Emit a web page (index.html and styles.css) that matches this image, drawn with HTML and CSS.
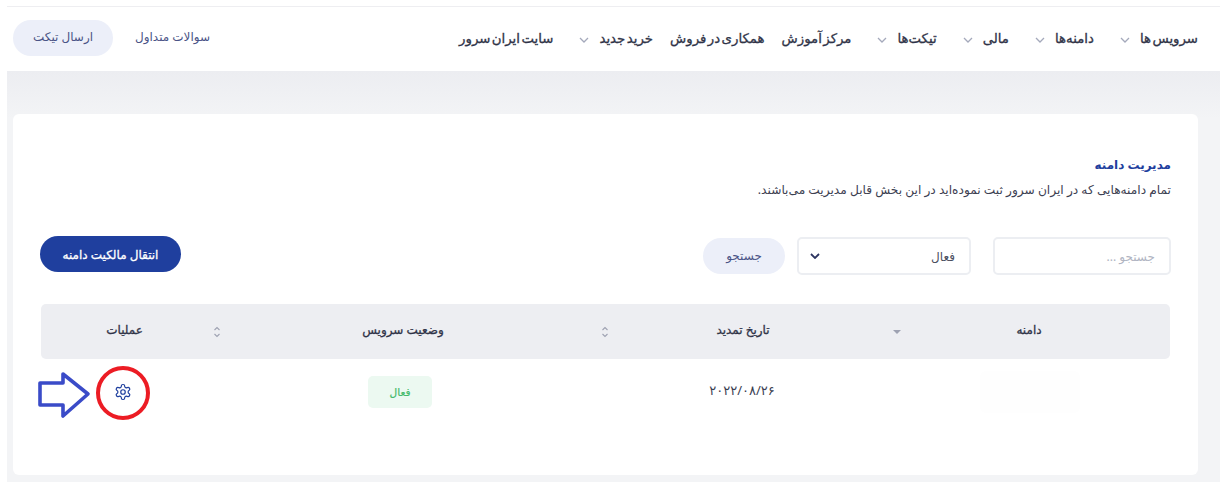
FILE: index.html
```html
<!DOCTYPE html>
<html lang="fa" dir="rtl">
<head>
<meta charset="utf-8">
<title>مدیریت دامنه</title>
<link rel="stylesheet" href="styles.css">
</head>
<body>
<div class="shell">
  <header class="topbar">
    <nav class="nav">
      <a class="nav-item">سرویس ها<svg class="chev" viewBox="0 0 10 6"><path d="M1 1l4 4 4-4"/></svg></a>
      <a class="nav-item">دامنه‌ها<svg class="chev" viewBox="0 0 10 6"><path d="M1 1l4 4 4-4"/></svg></a>
      <a class="nav-item">مالی<svg class="chev" viewBox="0 0 10 6"><path d="M1 1l4 4 4-4"/></svg></a>
      <a class="nav-item">تیکت‌ها<svg class="chev" viewBox="0 0 10 6"><path d="M1 1l4 4 4-4"/></svg></a>
      <a class="nav-item">مرکز آموزش</a>
      <a class="nav-item">همکاری در فروش</a>
      <a class="nav-item">خرید جدید<svg class="chev" viewBox="0 0 10 6"><path d="M1 1l4 4 4-4"/></svg></a>
      <a class="nav-item">سایت ایران سرور</a>
    </nav>
    <div class="top-actions">
      <a class="faq">سوالات متداول</a>
      <button class="pill pill-soft pill-ticket">ارسال تیکت</button>
    </div>
  </header>
  <main class="content">
    <section class="card">
      <h1 class="title">مدیریت دامنه</h1>
      <p class="lead">تمام دامنه‌هایی که در ایران سرور ثبت نموده‌اید در این بخش قابل مدیریت می‌باشند.</p>
      <div class="toolbar">
        <div class="field field-search">جستجو ...</div>
        <div class="field field-select"><span>فعال</span><svg class="select-chev" viewBox="0 0 10 6"><path d="M1 1l4 4 4-4"/></svg></div>
        <button class="pill pill-soft pill-search">جستجو</button>
        <button class="pill pill-primary">انتقال مالکیت دامنه</button>
      </div>
      <div class="table">
        <div class="thead">
          <div class="th"><span class="th-label">دامنه</span><svg class="caret" viewBox="0 0 8 4"><path d="M0 0h8L4 4z"/></svg></div>
          <div class="th"><span class="th-label">تاریخ تمدید</span><svg class="sort" viewBox="0 0 8 12"><path d="M1.500 4L4 1.500 6.500 4M1.500 8L4 10.500 6.500 8"/></svg></div>
          <div class="th"><span class="th-label">وضعیت سرویس</span><svg class="sort" viewBox="0 0 8 12"><path d="M1.500 4L4 1.500 6.500 4M1.500 8L4 10.500 6.500 8"/></svg></div>
          <div class="th"><span class="th-label">عملیات</span></div>
        </div>
        <div class="tbody">
          <div class="td"><div class="smudge"></div></div>
          <div class="td date">۲۰۲۲/۰۸/۲۶</div>
          <div class="td"><span class="badge">فعال</span></div>
          <div class="td">
            <svg class="gear" viewBox="0 0 24 24"><path d="M12.220 2h-.44a2 2 0 0 0-2 2v.18a2 2 0 0 1-1 1.730l-.43.25a2 2 0 0 1-2 0l-.15-.08a2 2 0 0 0-2.730.73l-.22.38a2 2 0 0 0 .73 2.730l.15.1a2 2 0 0 1 1 1.720v.51a2 2 0 0 1-1 1.740l-.15.09a2 2 0 0 0-.73 2.730l.22.38a2 2 0 0 0 2.730.73l.15-.08a2 2 0 0 1 2 0l.43.25a2 2 0 0 1 1 1.730V20a2 2 0 0 0 2 2h.44a2 2 0 0 0 2-2v-.18a2 2 0 0 1 1-1.730l.43-.25a2 2 0 0 1 2 0l.15.08a2 2 0 0 0 2.730-.73l.22-.39a2 2 0 0 0-.73-2.730l-.15-.08a2 2 0 0 1-1-1.740v-.5a2 2 0 0 1 1-1.740l.15-.09a2 2 0 0 0 .73-2.730l-.22-.38a2 2 0 0 0-2.730-.73l-.15.08a2 2 0 0 1-2 0l-.43-.25a2 2 0 0 1-1-1.730V4a2 2 0 0 0-2-2z"/><circle cx="12" cy="12" r="3"/></svg>
          </div>
        </div>
      </div>
    </section>
  </main>
</div>
<svg class="annotation" viewBox="0 0 120 56">
  <path class="arrow" d="M2 14H25V5L50 25 25 47V36H2z"/>
  <circle class="ring" cx="85" cy="24" r="25"/>
</svg>
</body>
</html>
```
FILE: styles.css
```css
* { box-sizing: border-box; }
html, body { margin: 0; height: 100%; background: #fff; }
body {
  position: relative;
  width: 1220px;
  height: 488px;
  overflow: hidden;
  padding: 6px 0 6px 0;
  font-family: "Noto Sans", "DejaVu Sans", sans-serif;
  color: #33374d;
}
.shell { margin-left: 7px; height: 476px; display: flex; flex-direction: column; border-top: 1px solid #eeeef1; }
.topbar {
  height: 64px;
  flex: none;
  display: flex;
  align-items: center;
  justify-content: space-between;
  padding: 0 22px 0 0;
  background: #fff;
}
.nav { display: flex; align-items: center; gap: 17px; padding-bottom: 2px; }
.nav-item { display: flex; align-items: center; gap: 10px; font-size: 13.300px; word-spacing: -2px; -webkit-text-stroke: .3px; color: #2f3347; white-space: nowrap; }
.chev { width: 10px; height: 6px; margin-top: 3px; margin-left: 9px; fill: none; stroke: #a4a9bb; stroke-width: 1.300; }
.top-actions { display: flex; align-items: center; gap: 22px; padding-left: 6px; margin-bottom: 2px; }
.faq { font-size: 12px; color: #4a5486; white-space: nowrap; margin-bottom: 3px; }
.pill { border: 0; border-radius: 18px; font-family: inherit; padding: 0; }
.pill-soft { background: #eceff9; color: #4a5486; font-size: 12px; }
.pill-ticket { width: 100px; height: 36px; padding-bottom: 3px; }
.pill-search { width: 82px; height: 36px; margin-right: 12px; padding-bottom: 2px; }
.pill-primary {
  width: 141px;
  height: 36px;
  align-self: flex-start;
  margin: -1px auto 0 -1px;
  background: #1f3f9e;
  color: #fff;
  font-size: 12px;
  -webkit-text-stroke: .3px;
}
.content {
  flex: 1;
  padding: 43px 22px 7px 6px;
  background: linear-gradient(180deg, #ecedf1 0, #f3f4f6 48px);
}
.card { height: 361px; background: #fff; border-radius: 6px; padding: 42px 27px 0 28px; }
.title { margin: 0; font-size: 12px; line-height: 18px; font-weight: 700; color: #1f3f9e; }
.lead { margin: 7px 0 0; font-size: 12.200px; line-height: 18px; color: #3d4152; }
.toolbar { display: flex; align-items: center; margin-top: 38px; height: 38px; }
.field {
  height: 38px;
  background: #fff;
  border: 2px solid #eceef2;
  border-radius: 5px;
  font-size: 12px;
  display: flex;
  align-items: center;
  padding: 0 14px;
}
.field-search { width: 178px; color: #b0b4c2; }
.field-select { width: 174px; margin-right: 22px; padding-left: 11px; justify-content: space-between; color: #4a4e60; }
.select-chev { width: 10px; height: 6px; fill: none; stroke: #2c3460; stroke-width: 1.800; }
.table { margin-top: 29px; margin-right: 1px; }
.thead, .tbody { display: grid; grid-template-columns: 280px 292px 388px 169px; }
.thead { height: 55px; background: #edeef2; border-radius: 5px; }
.th { display: grid; grid-template-columns: 1fr auto 1fr; align-items: center; padding-left: 3px; }
.th-label { grid-column: 2; font-size: 12px; -webkit-text-stroke: .3px; color: #2f3347; white-space: nowrap; margin: 0 5px 4px 0; }
.sort { grid-column: 3; justify-self: end; width: 8px; height: 12px; fill: none; stroke: #9ea2b2; stroke-width: 1.100; }
.caret { grid-column: 3; justify-self: end; width: 8px; height: 4px; fill: #9ea2b2; }
.tbody { height: 66px; align-items: center; justify-items: center; }
.td { display: flex; justify-content: center; align-items: center; }
.smudge { width: 100px; height: 42px; background: #fefefe; border-radius: 6px; }
.date { font-size: 13px; color: #3a3e52; margin: 0 4px 5px 0; }
.badge {
  width: 64px;
  height: 32px;
  margin-right: 8px;
  display: flex;
  align-items: center;
  justify-content: center;
  background: #ecf9f1;
  border-radius: 5px;
  font-size: 10.500px;
  -webkit-text-stroke: .2px;
  color: #42b96a;
}
.gear { width: 18px; height: 18px; fill: none; stroke: #1f3f9e; stroke-width: 1.600; margin-right: 5px; }
.annotation { position: absolute; left: 38px; top: 369px; width: 120px; height: 56px; overflow: visible; }
.arrow { fill: #fff; stroke: #3a4bc8; stroke-width: 3.600; stroke-linejoin: round; }
.ring { fill: none; stroke: #ec1c24; stroke-width: 4; }
```
